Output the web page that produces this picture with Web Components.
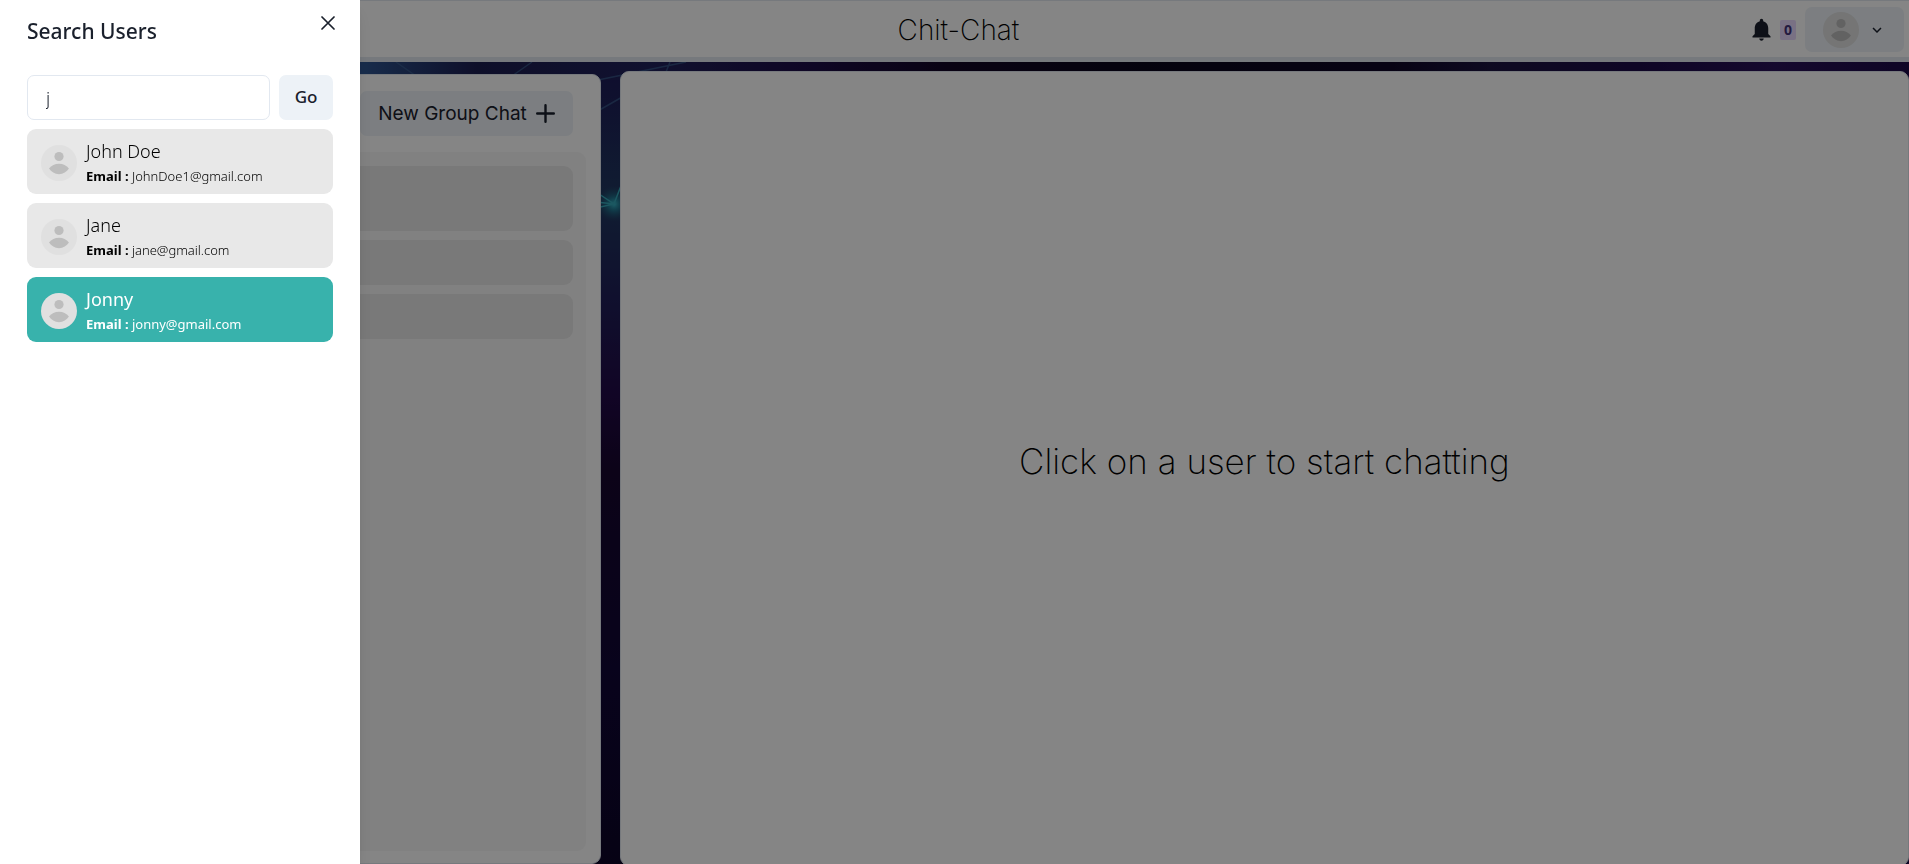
<!DOCTYPE html>
<html lang="en">
<head>
<meta charset="utf-8">
<title>Chit-Chat</title>
<style>
html, body { margin: 0; height: 100%; overflow: hidden; }
body {
  --ink: #1a202c; --line: #e2e8f0; --soft: #edf2f7;
  --ui: "Noto Sans", "Open Sans", sans-serif;
  --brand: Inter, "Open Sans", sans-serif;
  font: 400 18px/27px var(--ui); color: var(--ink);
}
</style>
</head>
<body>
<chat-app></chat-app>
<script>
function define(name, html, setup) {
  const template = document.createElement('template');
  template.innerHTML = '<style>*{box-sizing:border-box}button{font:inherit;color:inherit;border:0;margin:0;cursor:pointer}svg{display:block}</style>' + html;
  customElements.define(name, class extends HTMLElement {
    connectedCallback() {
      if (this.shadowRoot) return;
      const root = this.attachShadow({ mode: 'open' });
      root.append(template.content.cloneNode(true));
      if (setup) setup(this, root);
    }
  });
}

define('user-avatar', `
<style>:host { display: block; width: 36px; height: 36px; flex: none; } svg { width: 100%; height: 100%; }</style>
<svg viewBox="0 0 36 36" aria-hidden="true">
  <circle cx="18" cy="18" r="18" fill="#e0e0e0"/>
  <circle cx="18" cy="11.5" r="4.6" fill="#bdbdbd"/>
  <path d="M8 23.6C10.4 20.3 14 18.8 18 18.8s7.600 1.500 9.900 4.800C25.800 27 22.200 29.200 18 29.200S10.200 27 8 23.600z" fill="#bdbdbd"/>
</svg>`);

define('night-backdrop', `
<style>:host { display: block; position: absolute; inset: 0; } svg { width: 100%; height: 100%; }</style>
<svg viewBox="0 0 1909 864" preserveAspectRatio="xMidYMid slice" aria-hidden="true">
  <defs>
    <linearGradient id="sky" x1="0" x2="1" y1="0" y2="0">
      <stop offset=".19" stop-color="#2e5590"/><stop offset=".25" stop-color="#1c1d50"/>
      <stop offset=".34" stop-color="#20215a"/><stop offset=".42" stop-color="#1d0d48"/>
      <stop offset=".5" stop-color="#120424"/><stop offset=".6" stop-color="#09051a"/>
      <stop offset=".73" stop-color="#0f0526"/><stop offset=".78" stop-color="#1b1440"/>
      <stop offset=".86" stop-color="#1c0a48"/><stop offset=".93" stop-color="#2a1258"/>
      <stop offset="1" stop-color="#1c0a48"/>
    </linearGradient>
    <linearGradient id="deep" x1="0" x2="0" y1="0" y2="1">
      <stop offset="0" stop-color="#1e1c58"/><stop offset=".15" stop-color="#1f3860"/>
      <stop offset=".28" stop-color="#1f1f58"/><stop offset=".4" stop-color="#220a48"/>
      <stop offset=".5" stop-color="#17062e"/><stop offset=".75" stop-color="#110636"/>
      <stop offset="1" stop-color="#0c0528"/>
    </linearGradient>
    <radialGradient id="glow"><stop stop-color="#38b8c8"/><stop offset=".4" stop-color="#1f8298" stop-opacity=".7"/><stop offset="1" stop-color="#1f5068" stop-opacity="0"/></radialGradient>
  </defs>
  <rect width="1909" height="864" fill="url(#sky)"/>
  <rect x="590" y="80" width="40" height="784" fill="url(#deep)"/>
  <circle cx="614" cy="204" r="18" fill="url(#glow)"/>
  <g stroke="#35a7b8" stroke-width="1.500" fill="none">
    <path d="M596 192 614 204 596 208M596 202 614 204 624 178"/>
    <g stroke="#3b5f90" stroke-opacity=".7"><path d="M396 62l20 14M532 62l-20 14M598 80l88-18M670 62l-4 10M596 112l28-16"/></g>
  </g>
</svg>`);

define('app-header', `
<style>
:host { display: block; position: relative; }
header { display: grid; grid-template-columns: 1fr auto 1fr; align-items: center; background: #fff;
  border: solid var(--line); border-width: 1px 0 5px; padding: 6px 5px 5px 13px; }
h1 { margin: 0; grid-column: 2; font: 200 28px/36px var(--brand); color: #000; }
.tools { display: flex; justify-content: flex-end; align-items: center; }
.bell { display: flex; align-items: center; gap: 5px; background: none; padding: 0; margin-right: 9px; }
.badge { background: #e9d8fd; color: #44337a; border-radius: 2px; font: 700 14px/20px var(--ui); padding: 0 4px; }
.account { display: flex; align-items: center; gap: 9px; height: 45px; padding: 0 18px; border-radius: 7px; background: var(--soft); }
</style>
<header>
  <h1>Chit-Chat</h1>
  <div class="tools">
    <button class="bell" aria-label="Notifications">
      <svg width="27" height="27" viewBox="0 0 24 24" fill="currentColor"><path d="M12 22c1.100 0 2-.9 2-2h-4c0 1.100.89 2 2 2zm6-6v-5c0-3.070-1.640-5.640-4.500-6.320V4c0-.83-.67-1.500-1.500-1.500s-1.500.67-1.500 1.500v.68C7.630 5.360 6 7.920 6 11v5l-2 2v1h16v-1l-2-2z"/></svg>
      <span class="badge">0</span>
    </button>
    <button class="account" aria-label="Account">
      <user-avatar></user-avatar>
      <svg width="18" height="18" viewBox="0 0 24 24" fill="currentColor"><path d="M16.590 8.590L12 13.170 7.410 8.590 6 10l6 6 6-6z"/></svg>
    </button>
  </div>
</header>`);

define('chat-list', `
<style>
:host { display: flex; flex-direction: column; background: #fff; border: 1px solid var(--line); border-radius: 9px; padding: 16px 14px 12px; }
.top { display: flex; justify-content: flex-end; padding: 0 13px; margin-bottom: 16px; }
.new { display: flex; align-items: center; gap: 9px; height: 45px; padding: 0 18px; border-radius: 7px; background: var(--soft);
  font: 400 19px/27px var(--brand); }
.rows { flex: 1; margin: 0; padding: 14px 13px; list-style: none; display: flex; flex-direction: column; gap: 9px; border-radius: 9px; background: #f8f8f8; }
li { height: 45px; border-radius: 9px; background: #e8e8e8; }
li:first-child { height: 65px; }
</style>
<div class="top"><button class="new">New Group Chat
  <svg width="19" height="19" viewBox="0 0 19 19" fill="none" stroke="currentColor" stroke-width="2.400" stroke-linecap="round"><path d="M9.500 1.200v16.600M1.200 9.500h16.600"/></svg>
</button></div>
<ul class="rows"><li></li><li></li><li></li></ul>`);

define('chat-panel', `
<style>
:host { display: flex; align-items: center; justify-content: center; background: #fff; border: 1px solid var(--line); border-radius: 9px; padding-bottom: 14px; }
p { margin: 0; font: 200 35px/45px var(--brand); color: #000; }
</style>
<p><slot></slot></p>`);

define('user-card', `
<style>
:host { display: block; }
button { display: flex; align-items: center; gap: 9px; width: 100%; padding: 9px 14px 7px; border-radius: 9px; background: #e8e8e8;
  color: #000; text-align: left; font-weight: 300; }
:host([active]) button { background: #38b2ac; color: #fff; font-weight: 400; }
.name, .mail { display: block; }
.mail { font-size: 13px; line-height: 22px; }
b { font-weight: 700; }
</style>
<button><user-avatar></user-avatar><span><span class="name"><slot></slot></span><span class="mail"><b>Email : </b><span class="address"></span></span></span></button>`,
(host, root) => { root.querySelector('.address').textContent = host.getAttribute('email'); });

define('search-drawer', `
<style>
:host { display: block; position: fixed; inset: 0 auto 0 0; width: 360px; background: #fff;
  box-shadow: 0 11px 17px -3px rgba(0,0,0,.1), 0 4px 7px -2px rgba(0,0,0,.05); }
h2 { margin: 0; padding: 18px 27px; font: 500 21px/27px var(--ui); }
.close { position: absolute; top: 5px; right: 14px; width: 36px; height: 36px; display: grid; place-items: center; background: none; padding: 0; }
.body { display: flex; flex-direction: column; gap: 9px; padding: 12px 27px; }
form { display: flex; gap: 9px; }
input { flex: 1; min-width: 0; height: 45px; padding: 0 18px; border: 1px solid var(--line); border-radius: 7px; background: #fff; font: 300 18px/27px var(--ui); color: inherit; outline: 0; }
.go { width: 54px; height: 45px; padding: 0 0 2px; border-radius: 7px; background: var(--soft); font: 500 17px/27px var(--ui); }
</style>
<h2>Search Users</h2>
<button class="close" aria-label="Close"><svg width="14" height="14" viewBox="0 0 14 14" fill="none" stroke="currentColor" stroke-width="1.700" stroke-linecap="round"><path d="M1 1l12 12M13 1L1 13"/></svg></button>
<div class="body">
  <form><input type="text" value="j" aria-label="Search by name or email"><button class="go" type="button">Go</button></form>
  <slot></slot>
</div>`);

define('chat-app', `
<style>
:host { display: flex; flex-direction: column; position: relative; height: 100vh; overflow: hidden; }
main { flex: 1; min-height: 0; display: flex; gap: 19px; padding-top: 9px; position: relative; }
chat-list { flex: 0 0 31%; margin: 3px 0 0 9px; }
chat-panel { flex: 1; margin-bottom: -2px; }
.scrim { position: fixed; inset: 0; background: rgba(0,0,0,.48); }
</style>
<night-backdrop></night-backdrop>
<app-header></app-header>
<main>
  <chat-list></chat-list>
  <chat-panel>Click on a user to start chatting</chat-panel>
</main>
<div class="scrim"></div>
<search-drawer>
  <user-card email="JohnDoe1@gmail.com">John Doe</user-card>
  <user-card email="jane@gmail.com">Jane</user-card>
  <user-card email="jonny@gmail.com" active>Jonny</user-card>
</search-drawer>`);
</script>
</body>
</html>
